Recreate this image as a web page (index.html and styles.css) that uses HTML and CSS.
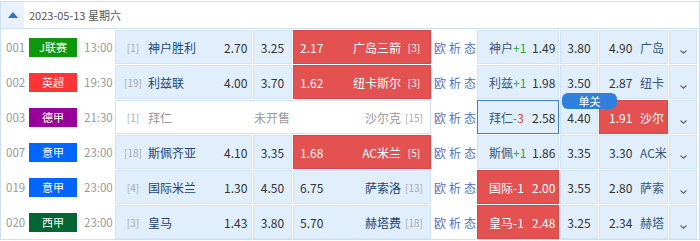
FILE: index.html
```html
<!DOCTYPE html>
<html lang="zh-CN">
<head>
<meta charset="utf-8">
<title>赛程</title>
<link rel="stylesheet" href="styles.css">
</head>
<body>
<div class="board">
  <div class="head">
    <div class="toggle"><span class="tri"></span></div>
    <div class="date">2023-05-13 星期六</div>
  </div>

  <div class="row">
    <div class="no">001</div>
    <div class="lg"><span class="badge j">J联赛</span></div>
    <div class="time">13:00</div>
    <div class="match">
      <div class="cell home"><span class="rank">[1]</span><span class="team">神户胜利</span><span class="odd">2.70</span></div>
      <div class="cell draw">3.25</div>
      <div class="cell away hot"><span class="odd">2.17</span><span class="team">广岛三箭</span><span class="rank">[3]</span></div>
    </div>
    <div class="links"><a>欧</a><a>析</a><a>态</a></div>
    <div class="hcp">
      <div class="cell h1"><span class="nm">神户<em class="up">+1</em></span><span>1.49</span></div>
      <div class="cell h2">3.80</div>
      <div class="cell h3"><span class="ho">4.90</span><span class="nm">广岛</span></div>
      <div class="cell more"><svg width="7" height="4" viewBox="0 0 7 4"><polyline points="0.5,0.5 3.5,3.2 6.5,0.5" fill="none" stroke="#666" stroke-width="1.1"/></svg></div>
    </div>
  </div>

  <div class="row">
    <div class="no">002</div>
    <div class="lg"><span class="badge epl">英超</span></div>
    <div class="time">19:30</div>
    <div class="match">
      <div class="cell home"><span class="rank">[19]</span><span class="team">利兹联</span><span class="odd">4.00</span></div>
      <div class="cell draw">3.70</div>
      <div class="cell away hot"><span class="odd">1.62</span><span class="team">纽卡斯尔</span><span class="rank">[3]</span></div>
    </div>
    <div class="links"><a>欧</a><a>析</a><a>态</a></div>
    <div class="hcp">
      <div class="cell h1"><span class="nm">利兹<em class="up">+1</em></span><span>1.98</span></div>
      <div class="cell h2">3.50</div>
      <div class="cell h3"><span class="ho">2.87</span><span class="nm">纽卡</span></div>
      <div class="cell more"><svg width="7" height="4" viewBox="0 0 7 4"><polyline points="0.5,0.5 3.5,3.2 6.5,0.5" fill="none" stroke="#666" stroke-width="1.1"/></svg></div>
    </div>
  </div>

  <div class="row">
    <div class="no">003</div>
    <div class="lg"><span class="badge bund">德甲</span></div>
    <div class="time">21:30</div>
    <div class="match closed">
      <div class="cell home"><span class="rank">[1]</span><span class="team">拜仁</span></div>
      <div class="cell draw">未开售</div>
      <div class="cell away"><span class="team">沙尔克</span><span class="rank">[15]</span></div>
    </div>
    <div class="links"><a>欧</a><a>析</a><a>态</a></div>
    <div class="hcp single">
      <span class="tab">单关</span>
      <div class="cell h1 sel"><span class="nm">拜仁<em class="down">-3</em></span><span>2.58</span></div>
      <div class="cell h2">4.40</div>
      <div class="cell h3 hot"><span class="ho">1.91</span><span class="nm">沙尔</span></div>
      <div class="cell more"><svg width="7" height="4" viewBox="0 0 7 4"><polyline points="0.5,0.5 3.5,3.2 6.5,0.5" fill="none" stroke="#666" stroke-width="1.1"/></svg></div>
    </div>
  </div>

  <div class="row">
    <div class="no">007</div>
    <div class="lg"><span class="badge serie">意甲</span></div>
    <div class="time">23:00</div>
    <div class="match">
      <div class="cell home"><span class="rank">[18]</span><span class="team">斯佩齐亚</span><span class="odd">4.10</span></div>
      <div class="cell draw">3.35</div>
      <div class="cell away hot"><span class="odd">1.68</span><span class="team">AC米兰</span><span class="rank">[5]</span></div>
    </div>
    <div class="links"><a>欧</a><a>析</a><a>态</a></div>
    <div class="hcp">
      <div class="cell h1"><span class="nm">斯佩<em class="up">+1</em></span><span>1.86</span></div>
      <div class="cell h2">3.35</div>
      <div class="cell h3"><span class="ho">3.30</span><span class="nm">AC米</span></div>
      <div class="cell more"><svg width="7" height="4" viewBox="0 0 7 4"><polyline points="0.5,0.5 3.5,3.2 6.5,0.5" fill="none" stroke="#666" stroke-width="1.1"/></svg></div>
    </div>
  </div>

  <div class="row">
    <div class="no">019</div>
    <div class="lg"><span class="badge serie">意甲</span></div>
    <div class="time">23:00</div>
    <div class="match">
      <div class="cell home"><span class="rank">[4]</span><span class="team">国际米兰</span><span class="odd">1.30</span></div>
      <div class="cell draw">4.50</div>
      <div class="cell away"><span class="odd">6.75</span><span class="team">萨索洛</span><span class="rank">[13]</span></div>
    </div>
    <div class="links"><a>欧</a><a>析</a><a>态</a></div>
    <div class="hcp">
      <div class="cell h1 hot"><span class="nm">国际-1</span><span>2.00</span></div>
      <div class="cell h2">3.55</div>
      <div class="cell h3"><span class="ho">2.80</span><span class="nm">萨索</span></div>
      <div class="cell more"><svg width="7" height="4" viewBox="0 0 7 4"><polyline points="0.5,0.5 3.5,3.2 6.5,0.5" fill="none" stroke="#666" stroke-width="1.1"/></svg></div>
    </div>
  </div>

  <div class="row">
    <div class="no">020</div>
    <div class="lg"><span class="badge liga">西甲</span></div>
    <div class="time">23:00</div>
    <div class="match">
      <div class="cell home"><span class="rank">[3]</span><span class="team">皇马</span><span class="odd">1.43</span></div>
      <div class="cell draw">3.80</div>
      <div class="cell away"><span class="odd">5.70</span><span class="team">赫塔费</span><span class="rank">[18]</span></div>
    </div>
    <div class="links"><a>欧</a><a>析</a><a>态</a></div>
    <div class="hcp">
      <div class="cell h1 hot"><span class="nm">皇马-1</span><span>2.48</span></div>
      <div class="cell h2">3.25</div>
      <div class="cell h3"><span class="ho">2.34</span><span class="nm">赫塔</span></div>
      <div class="cell more"><svg width="7" height="4" viewBox="0 0 7 4"><polyline points="0.5,0.5 3.5,3.2 6.5,0.5" fill="none" stroke="#666" stroke-width="1.1"/></svg></div>
    </div>
  </div>
</div>
</body>
</html>
```

FILE: styles.css
```css
* { box-sizing: border-box; }
html, body { margin: 0; padding: 0; background: #fff; }
body {
  font-family: "Noto Sans CJK SC", "Noto Sans", sans-serif;
  font-size: 12px;
  color: #333;
}
.board {
  width: 700px;
  margin-top: 1px;
  border: 1px solid #cfe0f2;
}
.head {
  display: flex;
  height: 27px;
  border-bottom: 1px solid #cfe0f2;
}
.toggle {
  width: 23px;
  background: #e8f1fc;
  display: flex;
  align-items: center;
  justify-content: center;
}
.tri {
  width: 0;
  height: 0;
  border-left: 5px solid transparent;
  border-right: 5px solid transparent;
  border-bottom: 6px solid #2e6fd0;
}
.date {
  padding-left: 5px;
  line-height: 26px;
  font-size: 11px;
  color: #555;
}
.row {
  display: flex;
  height: 35px;
  padding-top: 1px;
}
.no {
  width: 28px;
  padding-left: 5px;
  line-height: 34px;
  font-size: 11.5px;
  color: #999;
}
.lg {
  width: 48px;
  display: flex;
  align-items: center;
}
.badge {
  display: block;
  width: 48px;
  height: 19px;
  line-height: 19px;
  text-align: center;
  color: #fff;
  font-size: 11px;
}
.badge.j { background: #0b990b; }
.badge.epl { background: #ff3535; }
.badge.bund { background: #990099; }
.badge.serie { background: #0066ff; }
.badge.liga { background: #006633; }
.time {
  width: 38px;
  padding-left: 7px;
  line-height: 34px;
  font-size: 11.5px;
  color: #999;
}
.match {
  display: flex;
  gap: 1px;
  width: 316px;
}
.cell {
  display: flex;
  align-items: center;
  background: #e1eefb;
  border: 1px solid #d0e3f7;
  white-space: nowrap;
}
.cell.hot {
  background: #e35151;
  border-color: #d84646;
  color: #fff;
}
.match .home { width: 137px; padding-left: 4px; }
.match .draw { width: 39px; justify-content: center; }
.match .away { width: 138px; padding-left: 6px; padding-right: 3px; }
.rank {
  width: 26px;
  text-align: center;
  font-size: 10px;
  color: #aaa;
}
.hot .rank { color: #fff; }
.team {
  color: #1f4475;
  font-size: 12px;
}
.hot .team { color: #fff; }
.home .team { margin-left: 2px; }
.home .odd { margin-left: auto; width: 27px; }
.away .team { margin-left: auto; }
.match.closed {
  gap: 0;
  background: #fff;
  border: 1px solid #d0e3f7;
}
.closed .cell { background: #fff; border: 0; color: #999; }
.closed .team { color: #999; }
.closed .home { width: 136px; }
.closed .draw { width: 40px; }
.closed .away { width: 138px; justify-content: flex-end; }
.links {
  width: 46px;
  display: flex;
  align-items: center;
  padding-left: 3px;
}
.links a {
  color: #5073c6;
  margin-right: 3px;
  cursor: pointer;
}
.hcp {
  display: flex;
  gap: 1px;
  position: relative;
}
.hcp .h1 { width: 82px; padding-left: 11px; }
.hcp .h1 .nm { display: inline-block; width: 43px; }
.hcp .h2 { width: 38px; justify-content: center; }
.hcp .h3 { width: 69px; padding-left: 9px; }
.hcp .h3 .ho { display: inline-block; width: 31px; }
.hcp .more { width: 28px; justify-content: center; padding-top: 10px; }
.nm { color: #35567f; }
.hot .nm { color: #fff; }
.nm em { font-style: normal; }
.up { color: #2ea52e; }
.down { color: #e03c3c; }
.cell.sel { border-color: #3f7fd2; }
.tab {
  position: absolute;
  left: 85px;
  top: -7px;
  width: 55px;
  height: 16px;
  line-height: 16px;
  background: #2f7fdc;
  color: #fff;
  font-size: 11px;
  text-align: center;
  border-radius: 6px;
  z-index: 2;
}
```
